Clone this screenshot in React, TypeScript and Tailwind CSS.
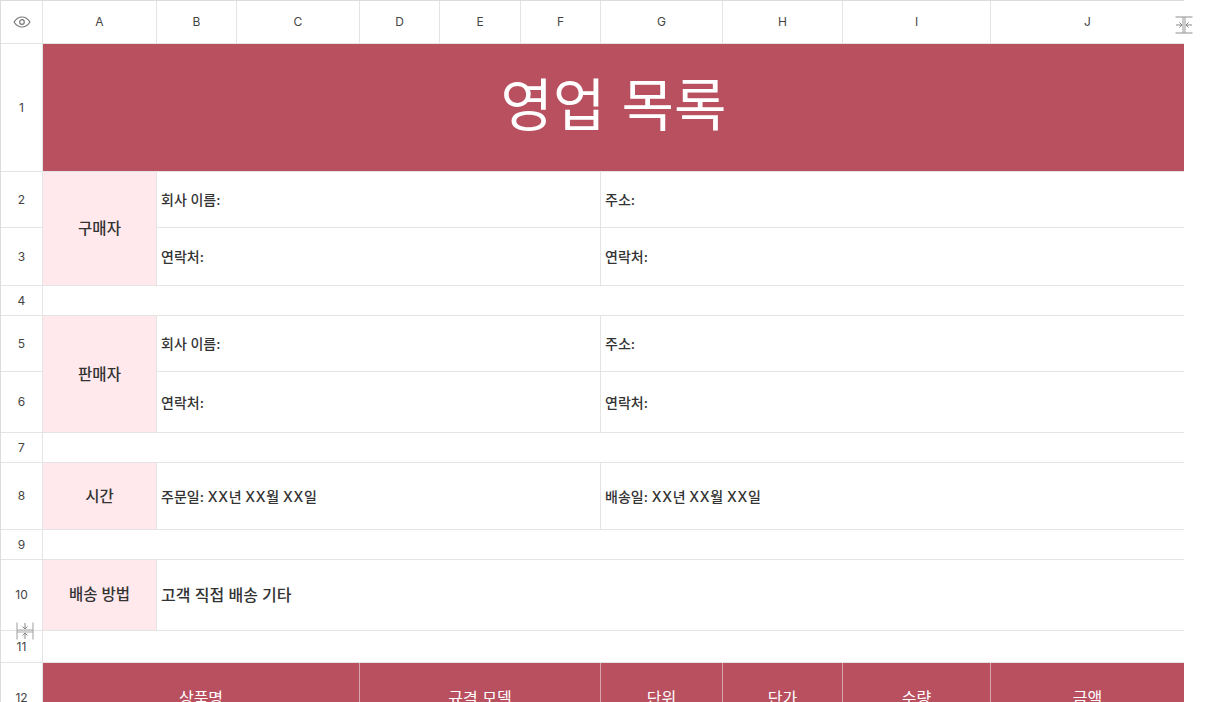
const COLUMNS = ['A', 'B', 'C', 'D', 'E', 'F', 'G', 'H', 'I', 'J']
const HEAD_CELLS = [
  { label: '상품명', span: 'col-span-3' },
  { label: '규격 모델', span: 'col-span-3' },
  { label: '단위', span: '' },
  { label: '단가', span: '' },
  { label: '수량', span: '' },
  { label: '금액', span: '' },
]

const rowNum = 'flex items-center justify-center border-r border-b border-[#e4e4e4] text-[12px] text-[#444]'
const labelCell = 'flex items-center justify-center border-r border-b border-[#e4e4e4] bg-[#ffe9ec] text-[15.5px] font-medium text-[#333]'
const textCell = 'flex items-center border-r border-b border-[#e4e4e4] pl-1 text-[14px] font-medium text-[#333]'
const blankCell = 'col-span-10 border-r border-b border-[#e4e4e4]'

function ResizeMark({ vertical }: { vertical?: boolean }) {
  return (
    <svg width="18" height="18" viewBox="0 0 18 18" fill="none">
      <g transform={vertical ? 'rotate(90 9 9)' : undefined}>
        <path d="M0.500 1H17.500M0.500 17H17.500" stroke="#b5b5b5" strokeWidth="1.300" />
        <path d="M8 1V17M10 1V17" stroke="#a8a8a8" strokeWidth="1.200" />
        <path d="M1 9H7M4.500 6.500 7 9 4.500 11.500M17 9H11M13.500 6.500 11 9 13.500 11.500" stroke="#7a7a7a" strokeWidth="0.900" />
      </g>
    </svg>
  )
}

function DateText({ label }: { label: string }) {
  return (
    <span>
      {label}: <span className="tracking-[0.7px]">XX</span>년 <span className="tracking-[0.7px]">XX</span>월{' '}
      <span className="tracking-[0.7px]">XX</span>일
    </span>
  )
}

export default function App() {
  return (
    <div className="relative h-[702px] w-[1210px] overflow-hidden bg-white font-['Inter','Noto_Sans_CJK_KR',sans-serif]">
      <div className="w-[1184px] overflow-hidden">
        <div className="grid w-[1185px] grid-cols-[42px_114px_80px_123px_80px_81px_80px_122px_120px_148px_194px] grid-rows-[43px_128px_56px_58px_30px_56px_61px_30px_67px_30px_71px_32px_70px] border-t border-l border-[#dcdcdc]">
          {/* Column header */}
          <div className={rowNum}>
            <svg width="18" height="12" viewBox="0 0 18 12" fill="none" stroke="#777" strokeWidth="1.200">
              <path d="M1 6c2-3 4.800-5 8-5s6 2 8 5c-2 3-4.800 5-8 5S3 9 1 6Z" />
              <circle cx="9" cy="6" r="2.300" />
            </svg>
          </div>
          {COLUMNS.map((c) => (
            <div key={c} className={rowNum}>{c}</div>
          ))}

          {/* Title */}
          <div className={rowNum}>1</div>
          <div className="col-span-10 flex items-center justify-center border-r border-b border-[#e4e4e4] bg-[#b9505f] pb-[4px] text-[57px] text-white">
            영업 목록
          </div>

          {/* Buyer */}
          <div className={rowNum}>2</div>
          <div className={`${labelCell} row-span-2`}>구매자</div>
          <div className={`${textCell} col-span-5`}>회사 이름:</div>
          <div className={`${textCell} col-span-4`}>주소:</div>
          <div className={rowNum}>3</div>
          <div className={`${textCell} col-span-5`}>연락처:</div>
          <div className={`${textCell} col-span-4`}>연락처:</div>

          <div className={rowNum}>4</div>
          <div className={blankCell} />

          {/* Seller */}
          <div className={rowNum}>5</div>
          <div className={`${labelCell} row-span-2 pt-[2px]`}>판매자</div>
          <div className={`${textCell} col-span-5`}>회사 이름:</div>
          <div className={`${textCell} col-span-4`}>주소:</div>
          <div className={rowNum}>6</div>
          <div className={`${textCell} col-span-5`}>연락처:</div>
          <div className={`${textCell} col-span-4`}>연락처:</div>

          <div className={rowNum}>7</div>
          <div className={blankCell} />

          {/* Dates */}
          <div className={rowNum}>8</div>
          <div className={`${labelCell} pt-[2px]`}>시간</div>
          <div className={`${textCell} col-span-5`}><DateText label="주문일" /></div>
          <div className={`${textCell} col-span-4`}><DateText label="배송일" /></div>

          <div className={rowNum}>9</div>
          <div className={blankCell} />

          {/* Shipping */}
          <div className={rowNum}>10</div>
          <div className={labelCell}>배송 방법</div>
          <div className={`${textCell} col-span-9 text-[16px]`}>고객 직접 배송 기타</div>

          <div className={rowNum}>11</div>
          <div className={blankCell} />

          {/* Table head */}
          <div className={rowNum}>12</div>
          {HEAD_CELLS.map((cell) => (
            <div
              key={cell.label}
              className={`${cell.span} flex items-center justify-center border-r border-[#d9a5ad] bg-[#b9505f] text-[16px] text-white`}
            >
              {cell.label}
            </div>
          ))}
        </div>
      </div>

      <div className="absolute top-[16px] left-[1175px]">
        <ResizeMark />
      </div>
      <div className="absolute top-[622px] left-[16px]">
        <ResizeMark vertical />
      </div>
    </div>
  )
}
